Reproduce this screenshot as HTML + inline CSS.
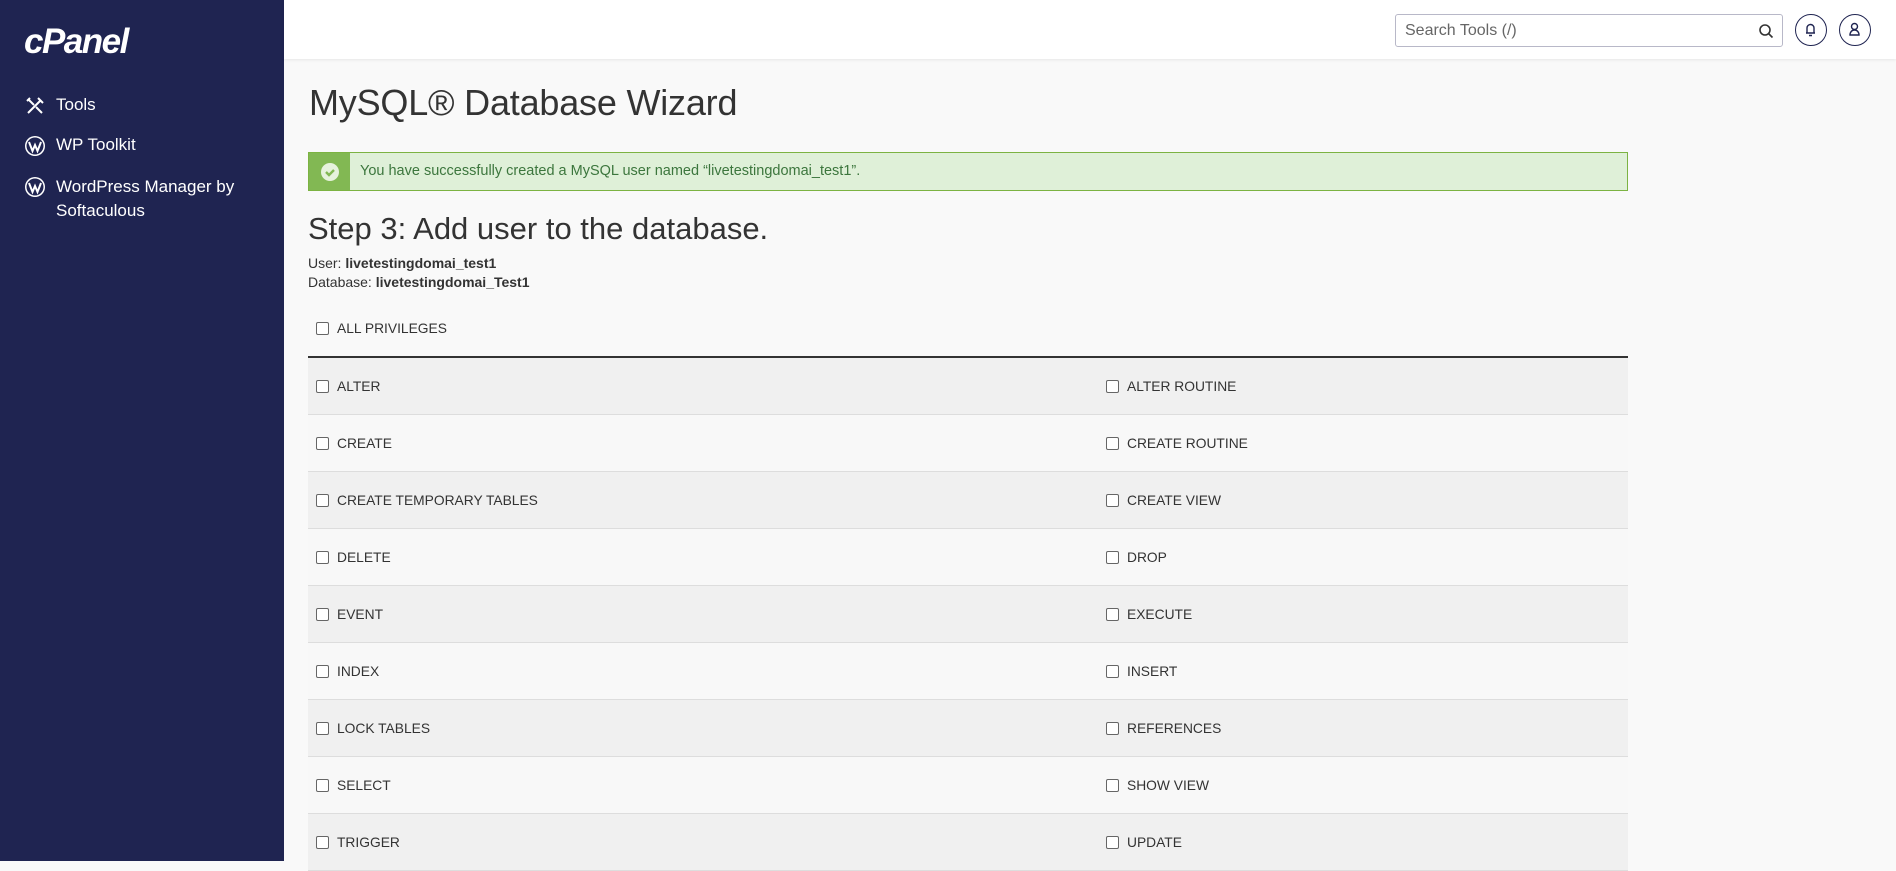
<!DOCTYPE html>
<html style="background:#f9f9f9"><head><meta charset="utf-8">
<style>
*{box-sizing:border-box;margin:0;padding:0}
body{width:1896px;height:861px;overflow:hidden;background:#f9f9f9;font-family:"Liberation Sans",sans-serif;color:#333;position:relative}
#side{position:fixed;left:0;top:0;width:284px;height:100%;min-height:861px;background:#1f2451}
.logo{position:absolute;left:24px;top:22px;color:#fff;font-size:35px;font-weight:bold;font-style:italic;letter-spacing:-1.5px}
.nav{position:absolute;left:24px;color:#fff;font-size:17px;display:flex;align-items:flex-start}
.nav .ic{width:22px;height:22px;margin-right:10px;flex:none}
#top{position:absolute;left:284px;top:0;right:0;height:59px;background:#fff;box-shadow:0 1px 3px rgba(0,0,0,.08)}
.search{position:absolute;left:1395px;top:14px;width:388px;height:33px;border:1px solid #b8b8c8;border-radius:3px;background:#fff;font-size:16px;color:#666;padding:7px 9px}
.circ{position:absolute;top:14px;width:32px;height:32px;border:1.5px solid #1f2451;border-radius:50%}
h1{position:absolute;left:309px;top:82px;font-size:36px;font-weight:normal;color:#333;letter-spacing:-.2px}
.alert{position:absolute;left:308px;top:152px;width:1320px;height:39px;border:1px solid #7cb342;background:#dff0d8;display:flex}
.alert .gi{width:41px;background:#82b853;display:flex;align-items:center;justify-content:center}
.alert .tx{padding-left:10px;line-height:37px;font-size:14.5px;color:#3c763d}
h2{position:absolute;left:308px;top:211px;font-size:31px;font-weight:normal;color:#333}
.info{position:absolute;left:308px;top:254px;font-size:14px;line-height:19px}
.cb{display:inline-block;width:13px;height:13px;border:1px solid #666;border-radius:2px;background:#fff;vertical-align:middle;margin-right:8px}
.lbl{font-size:13.8px;color:#333}
.all{position:absolute;left:316px;top:320px}
.tbl{position:absolute;left:308px;top:356px;width:1320px;border-top:2px solid #333}
.row{height:57px;border-bottom:1px solid #ddd;position:relative}
.row:nth-child(odd){background:#f0f0f0}
.row:nth-child(even){background:#f8f8f8}
.row .l{position:absolute;left:8px;top:20px}
.row .r{position:absolute;left:798px;top:20px}
</style></head><body>
<div id="side">
<div class="logo">cPanel</div>
<div class="nav" style="top:95px"><svg class="ic" viewBox="0 0 22 22" fill="none" stroke="#fff" stroke-width="2"><path d="M4 18L17 5M14 3l5 5M4 4l6 6M12 12l6 6M3 6l3-3"/></svg>Tools</div>
<div class="nav" style="top:135px"><svg class="ic" viewBox="0 0 22 22"><circle cx="11" cy="11" r="10" fill="#fff"/><circle cx="11" cy="11" r="8.5" fill="#1f2451"/><path d="M5 7l3.5 9 2.5-6 2.5 6 3.5-9" stroke="#fff" stroke-width="2" fill="none"/></svg>WP Toolkit</div>
<div class="nav" style="top:175px;line-height:24px"><svg class="ic" viewBox="0 0 22 22" style="margin-top:1px"><circle cx="11" cy="11" r="10" fill="#fff"/><circle cx="11" cy="11" r="8.5" fill="#1f2451"/><path d="M5 7l3.5 9 2.5-6 2.5 6 3.5-9" stroke="#fff" stroke-width="2" fill="none"/></svg><span>WordPress Manager by<br>Softaculous</span></div>
</div>
<div id="top"></div>
<div class="search">Search Tools (/)<svg style="position:absolute;right:8px;top:8px" width="16" height="16" viewBox="0 0 16 16" fill="none" stroke="#333" stroke-width="1.6"><circle cx="7" cy="7" r="5"/><path d="M11 11l3.5 3.5"/></svg></div>
<div class="circ" style="left:1795px"><svg width="29" height="29" viewBox="0 0 29 29" fill="none" stroke="#1f2451" stroke-width="1.4"><path d="M10 18h9M11 18v-5a3.5 3.5 0 017 0v5M13 20.5h3"/></svg></div>
<div class="circ" style="left:1839px"><svg width="29" height="29" viewBox="0 0 29 29" fill="none" stroke="#1f2451" stroke-width="1.4"><circle cx="14.5" cy="11.5" r="3"/><path d="M10 20c0-3 2-5 4.5-5s4.5 2 4.5 5z"/></svg></div>
<h1>MySQL® Database Wizard</h1>
<div class="alert"><div class="gi"><svg width="20" height="20" viewBox="0 0 20 20"><circle cx="10" cy="10" r="9" fill="#e6f2dc"/><path d="M6 10l3 3 5-5" stroke="#82b853" stroke-width="2.4" fill="none"/></svg></div><div class="tx">You have successfully created a MySQL user named “livetestingdomai_test1”.</div></div>
<h2>Step 3: Add user to the database.</h2>
<div class="info">User: <b>livetestingdomai_test1</b><br>Database: <b>livetestingdomai_Test1</b></div>
<div class="all"><span class="cb"></span><span class="lbl">ALL PRIVILEGES</span></div>
<div class="tbl">
<div class="row"><div class="l"><span class="cb"></span><span class="lbl">ALTER</span></div><div class="r"><span class="cb"></span><span class="lbl">ALTER ROUTINE</span></div></div>
<div class="row"><div class="l"><span class="cb"></span><span class="lbl">CREATE</span></div><div class="r"><span class="cb"></span><span class="lbl">CREATE ROUTINE</span></div></div>
<div class="row"><div class="l"><span class="cb"></span><span class="lbl">CREATE TEMPORARY TABLES</span></div><div class="r"><span class="cb"></span><span class="lbl">CREATE VIEW</span></div></div>
<div class="row"><div class="l"><span class="cb"></span><span class="lbl">DELETE</span></div><div class="r"><span class="cb"></span><span class="lbl">DROP</span></div></div>
<div class="row"><div class="l"><span class="cb"></span><span class="lbl">EVENT</span></div><div class="r"><span class="cb"></span><span class="lbl">EXECUTE</span></div></div>
<div class="row"><div class="l"><span class="cb"></span><span class="lbl">INDEX</span></div><div class="r"><span class="cb"></span><span class="lbl">INSERT</span></div></div>
<div class="row"><div class="l"><span class="cb"></span><span class="lbl">LOCK TABLES</span></div><div class="r"><span class="cb"></span><span class="lbl">REFERENCES</span></div></div>
<div class="row"><div class="l"><span class="cb"></span><span class="lbl">SELECT</span></div><div class="r"><span class="cb"></span><span class="lbl">SHOW VIEW</span></div></div>
<div class="row"><div class="l"><span class="cb"></span><span class="lbl">TRIGGER</span></div><div class="r"><span class="cb"></span><span class="lbl">UPDATE</span></div></div>
</div>
</body></html>
